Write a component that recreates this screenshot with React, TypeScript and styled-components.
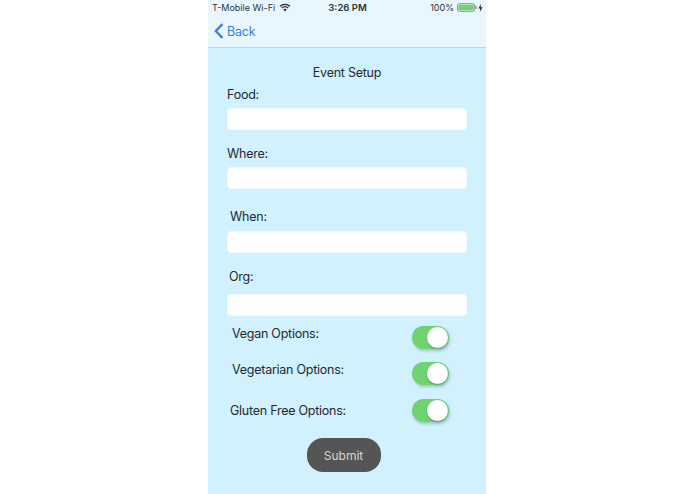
import React from 'react';
import styled, { createGlobalStyle } from 'styled-components';

const GlobalStyle = createGlobalStyle`
  html, body {
    margin: 0;
    padding: 0;
    background: #ffffff;
  }
  body {
    font-family: Inter, "Liberation Sans", sans-serif;
  }
`;

const Page = styled.div`
  display: flex;
  justify-content: flex-start;
  width: 695px;
  height: 494px;
  padding-left: 208px;
  box-sizing: border-box;
  overflow: hidden;
`;

const Phone = styled.div`
  display: flex;
  flex-direction: column;
  width: 278px;
  height: 494px;
  background: #d2f1fe;
  color: #1f2a30;
`;

const Header = styled.header`
  display: flex;
  flex-direction: column;
  height: 47px;
  background: #e8f7fe;
  border-bottom: 1px solid #bfd5de;
`;

const StatusBar = styled.div`
  display: grid;
  grid-template-columns: 1fr auto 1fr;
  align-items: center;
  height: 15px;
  padding: 0 3px 0 4px;
  font-size: 9px;
  color: #2c3438;
`;

const Carrier = styled.div`
  display: flex;
  align-items: center;
  gap: 4px;
`;

const Clock = styled.div`
  font-weight: 600;
  font-size: 9.5px;
`;

const Power = styled.div`
  display: flex;
  align-items: center;
  justify-content: flex-end;
  gap: 3px;
`;

const Battery = styled.span`
  display: flex;
  align-items: center;
  gap: 1px;
`;

const BackLink = styled.a`
  display: flex;
  align-items: center;
  gap: 3px;
  margin: 8px 0 0 6px;
  font-size: 12.5px;
  letter-spacing: -0.2px;
  color: #3b7fe0;
`;

const Title = styled.h1`
  margin: 16px 0 3px;
  font-size: 12.5px;
  font-weight: 400;
  letter-spacing: -0.25px;
  line-height: 18px;
  text-align: center;
`;

const Form = styled.form`
  display: flex;
  flex-direction: column;
  padding: 0 19px;
`;

const Label = styled.label<{ $indent?: number; $top: number; $bottom?: number }>`
  display: block;
  margin: ${({ $top }) => $top}px 0 ${({ $bottom }) => $bottom ?? 4}px ${({ $indent }) => $indent ?? 0}px;
  font-size: 12.5px;
  letter-spacing: -0.25px;
  line-height: 18px;
`;

const TextInput = styled.input`
  display: block;
  box-sizing: border-box;
  width: 240px;
  height: 22px;
  padding: 0 6px;
  background: #ffffff;
  border: 1px solid #f2fafd;
  border-radius: 4px;
  outline: none;
`;

const OptionRow = styled.div<{ $top: number; $indent: number }>`
  display: flex;
  align-items: center;
  justify-content: space-between;
  height: 23px;
  margin: ${({ $top }) => $top}px 18px 0 ${({ $indent }) => $indent}px;
`;

const OptionLabel = styled.span<{ $lift: number }>`
  font-size: 12.5px;
  letter-spacing: -0.25px;
  line-height: 18px;
  margin-bottom: ${({ $lift }) => $lift}px;
`;

const Toggle = styled.span`
  display: flex;
  justify-content: flex-end;
  align-items: center;
  box-sizing: border-box;
  width: 37px;
  height: 23px;
  padding-right: 1px;
  background: #6fd46f;
  border-radius: 12px;
  box-shadow: 1px 2px 3px rgba(60, 90, 100, 0.3);
`;

const Knob = styled.span`
  width: 21px;
  height: 21px;
  background: #ffffff;
  border-radius: 50%;
  box-shadow: 0 1px 2px rgba(0, 0, 0, 0.25);
`;

const SubmitButton = styled.button`
  align-self: center;
  width: 74px;
  height: 34px;
  margin: 16px 7px 0 0;
  background: #555555;
  border: 0;
  border-radius: 16px;
  color: #d6d6d6;
  font-family: inherit;
  font-size: 12px;
`;

const WifiIcon = () => (
  <svg width="12" height="9" viewBox="0 0 12 9">
    <path d="M6 8.6 4.3 6.6a2.6 2.6 0 0 1 3.4 0z" fill="#22292d" />
    <path d="M1 3.2a7.6 7.6 0 0 1 10 0M2.7 5.1a5 5 0 0 1 6.6 0" fill="none" stroke="#22292d" strokeWidth="1.3" />
  </svg>
);

const BatteryIcon = () => (
  <svg width="20" height="9" viewBox="0 0 21 9">
    <rect x="0.5" y="0.5" width="18" height="8" rx="2" fill="none" stroke="#6a7478" strokeWidth="0.8" />
    <rect x="1.5" y="1.5" width="16" height="6" rx="1" fill="#6fd46f" />
    <rect x="19.3" y="3" width="1.2" height="3" rx="0.5" fill="#6a7478" />
  </svg>
);

const BoltIcon = () => (
  <svg width="5" height="8" viewBox="0 0 5 8">
    <path d="M3 0 0.4 4.5H2.2L1.8 8 4.6 3.3H2.7z" fill="#22292d" />
  </svg>
);

const ChevronIcon = () => (
  <svg width="10" height="16" viewBox="0 0 10 17">
    <path d="M8.6 1.2 1.6 8.5l7 7.3" fill="none" stroke="#3b7fe0" strokeWidth="2.4" />
  </svg>
);

const options = [
  { name: 'Vegan Options:', top: 10, indent: 5, lift: 7 },
  { name: 'Vegetarian Options:', top: 13, indent: 5, lift: 7 },
  { name: 'Gluten Free Options:', top: 14, indent: 3, lift: 0 },
];

export default function App() {
  return (
    <Page>
      <GlobalStyle />
      <Phone>
        <Header>
          <StatusBar>
            <Carrier>
              T-Mobile Wi-Fi
              <WifiIcon />
            </Carrier>
            <Clock>3:26 PM</Clock>
            <Power>
              100%
              <Battery>
                <BatteryIcon />
                <BoltIcon />
              </Battery>
            </Power>
          </StatusBar>
          <BackLink>
            <ChevronIcon />
            Back
          </BackLink>
        </Header>
        <Title>Event Setup</Title>
        <Form>
          <Label $top={1}>Food:</Label>
          <TextInput />
          <Label $top={15}>Where:</Label>
          <TextInput />
          <Label $top={19} $bottom={5} $indent={3}>When:</Label>
          <TextInput />
          <Label $top={15} $bottom={8} $indent={2}>Org:</Label>
          <TextInput />
          {options.map((o) => (
            <OptionRow key={o.name} $top={o.top} $indent={o.indent}>
              <OptionLabel $lift={o.lift}>{o.name}</OptionLabel>
              <Toggle>
                <Knob />
              </Toggle>
            </OptionRow>
          ))}
          <SubmitButton type="button">Submit</SubmitButton>
        </Form>
      </Phone>
    </Page>
  );
}
